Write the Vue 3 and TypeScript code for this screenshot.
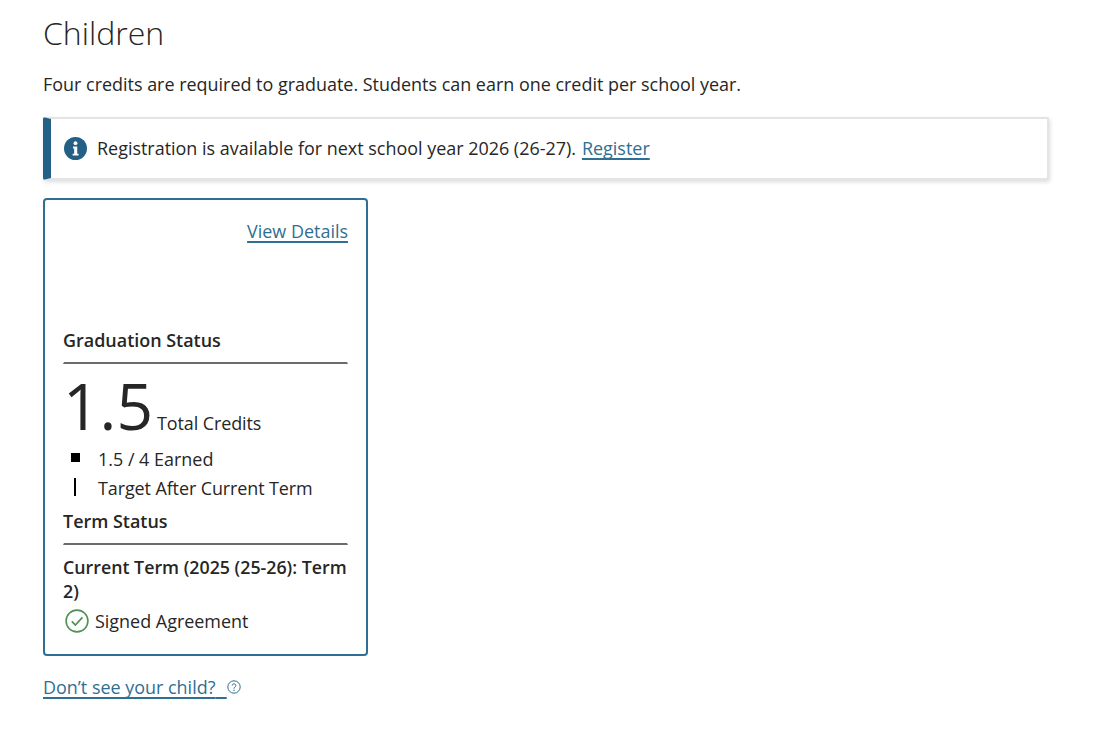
<script setup lang="ts">
const title = 'Children'
</script>

<template>
  <main class="page">
    <h1 class="title">{{ title }}</h1>
    <p class="intro">Four credits are required to graduate. Students can earn one credit per school year.</p>
    <div class="alert">
      <svg class="info" viewBox="0 0 24 24" width="23" height="23">
        <circle cx="12" cy="12" r="12" fill="#245f85" />
        <circle cx="12" cy="6.4" r="2" fill="#fff" />
        <path d="M9.4 10h4.4v7.4h1.4v2H9v-2h1.6v-5.4H9.4z" fill="#fff" />
      </svg>
      <span>Registration is available for next school year 2026 (26-27).</span>
      <a class="link" href="#">Register</a>
    </div>
    <section class="card">
      <div class="details"><a class="link" href="#">View Details</a></div>
      <h2 class="heading grad">Graduation Status</h2>
      <hr class="rule" />
      <div class="total"><span class="big">1.5</span><span class="tc">Total Credits</span></div>
      <div class="legend">
        <div class="row"><span class="mark"><i class="sq"></i></span>1.5 / 4 Earned</div>
        <div class="row target"><span class="mark"><i class="bar"></i></span>Target After Current Term</div>
      </div>
      <h2 class="heading term">Term Status</h2>
      <hr class="rule" />
      <div class="current">Current Term (2025 (25-26): Term 2)</div>
      <div class="signed">
        <svg viewBox="0 0 24 24" width="24" height="24" fill="none" stroke="#4f9150">
          <circle cx="12" cy="12" r="10.9" stroke-width="1.6" />
          <path d="M6.8 12.4l3.6 3.6 7-7.6" stroke-width="1.7" />
        </svg>
        <span>Signed Agreement</span>
      </div>
    </section>
    <div class="help">
      <a class="link" href="#">Don’t see your child?<span class="gap">&nbsp;&nbsp;</span></a>
      <svg class="q" viewBox="0 0 14 14" width="14" height="14">
        <circle cx="7" cy="7" r="6.2" fill="none" stroke="#2f6f91" stroke-width="1" />
        <path d="M5.2 5.6a1.8 1.8 0 1 1 2.8 1.5c-.7.4-1 .8-1 1.5" fill="none" stroke="#2f6f91" stroke-width="1" />
        <circle cx="7" cy="10.3" r=".7" fill="#2f6f91" />
      </svg>
    </div>
  </main>
</template>

<style scoped>
.page {
  box-sizing: border-box;
  width: 1108px;
  height: 740px;
  padding: 13px 59px 0 43px;
  font-family: "Open Sans", sans-serif;
  font-size: 17.95px;
  line-height: 24px;
  color: #262626;
  overflow: hidden;
}
.title {
  margin: 0;
  font-size: 32px;
  line-height: 40px;
  font-weight: 300;
}
.intro {
  margin: 19px 0 0;
  height: 24px;
}
.alert {
  box-sizing: border-box;
  display: flex;
  align-items: center;
  gap: 6px;
  height: 63px;
  margin-top: 21px;
  padding-left: 13px;
  padding-bottom: 2px;
  background: #fff;
  border: 2px solid #e4e4e4;
  border-left: 8px solid #245f85;
  border-radius: 2px;
  box-shadow: 1px 2px 4px rgba(0, 0, 0, 0.14);
}
.info { margin: 2px 4px 0 0; flex: none; }
.link {
  color: #2f6f91;
  text-decoration: underline;
  text-decoration-thickness: 1.5px;
  text-decoration-skip-ink: none;
  text-underline-offset: 3px;
}
.gap { letter-spacing: 1px; }
.card {
  box-sizing: border-box;
  width: 325px;
  height: 458px;
  margin-top: 18px;
  padding: 19px 18px 0;
  border: 2px solid #2f6f91;
  border-radius: 4px;
}
.details { text-align: right; }
.heading {
  margin: 0;
  font-size: 17.95px;
  line-height: 24px;
  font-weight: 600;
}
.rule {
  box-sizing: border-box;
  height: 2px;
  margin: 10px 0 0 0;
  border: 0;
  border-bottom: 2px solid #6b6b6b;
  border-left: 1px solid transparent;
  border-right: 1px solid transparent;
}
.grad { margin-top: 85px; }
.total {
  display: flex;
  align-items: baseline;
  height: 73px;
  padding-top: 6px;
}
.big { font-size: 64px; line-height: 72px; font-weight: 400; margin-right: 4px; }
.tc { letter-spacing: -0.08px; }
.legend { margin-top: 2px; }
.row { display: flex; height: 29px; line-height: 29px; }
.target { letter-spacing: -0.09px; }
.mark { width: 35px; padding-left: 8px; box-sizing: border-box; }
.sq { display: block; width: 9px; height: 9px; margin-top: 8px; background: #000; }
.bar { display: block; width: 2px; height: 18px; margin: 4px 0 0 3px; background: #000; }
.term { margin-top: 6px; }
.current { font-size: 17.8px; font-weight: 600; margin-top: 10px; }
.signed { display: flex; align-items: center; gap: 6px; margin-top: 3px; height: 30px; margin-left: 2px; }
.help { display: flex; align-items: flex-start; margin-top: 19px; height: 24px; }
.q { margin-top: 5px; }
</style>
